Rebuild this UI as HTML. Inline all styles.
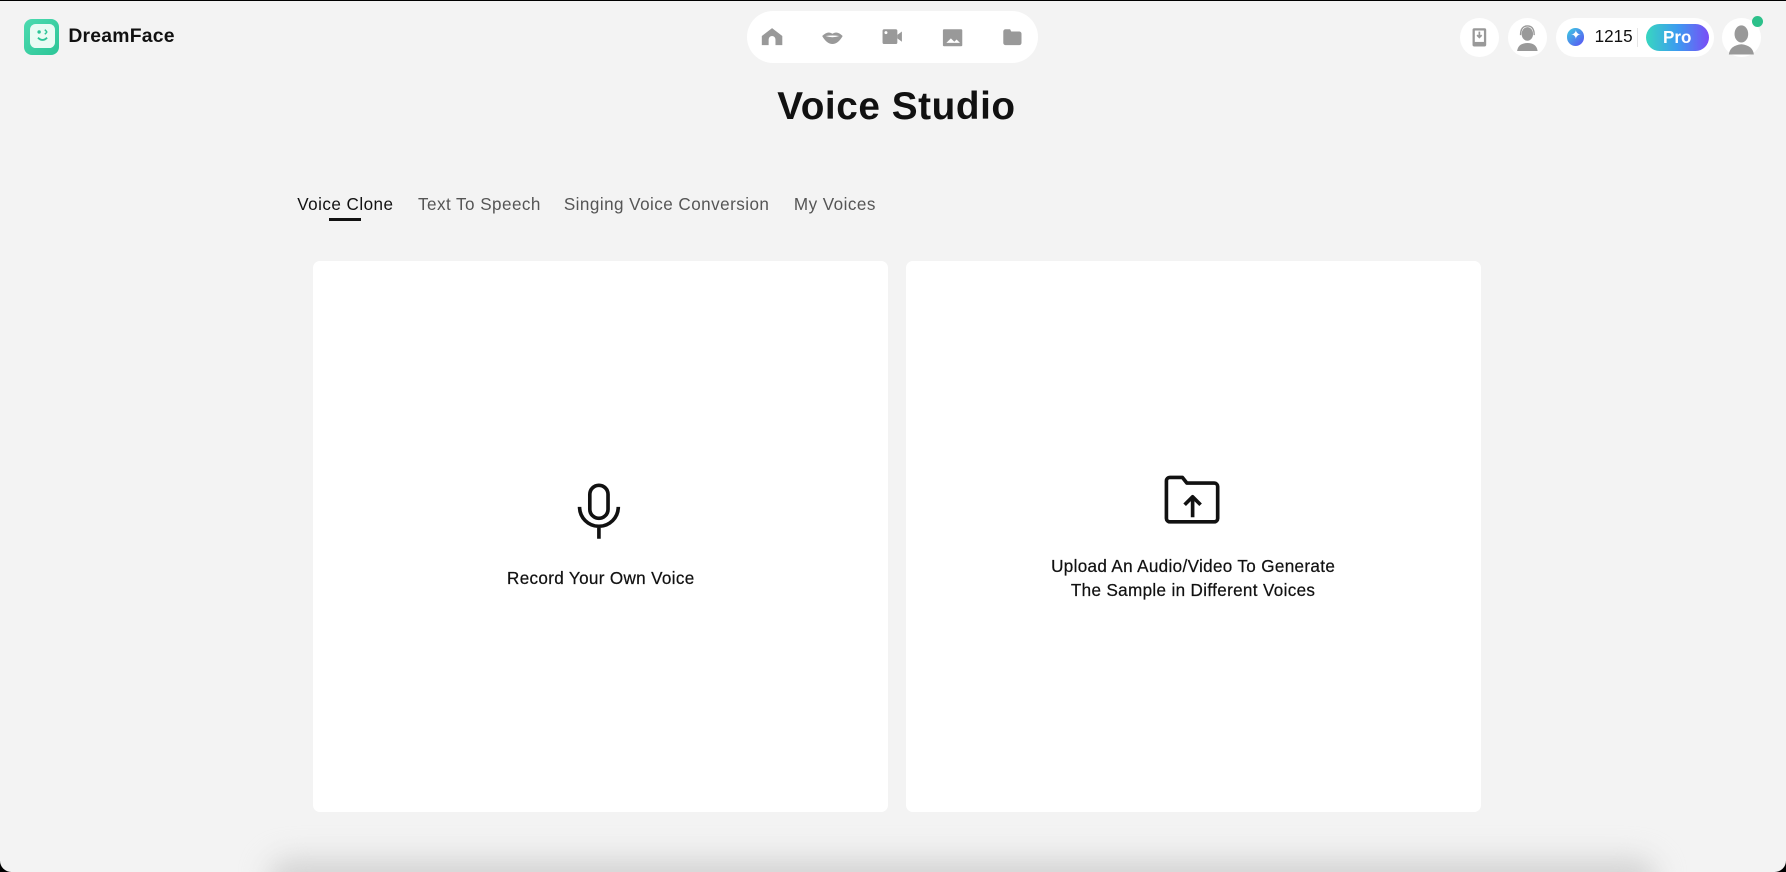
<!DOCTYPE html>
<html><head><meta charset="utf-8"><style>
html{zoom:1.13903;overflow:hidden}
body{margin:0;width:1568px;height:766px;background:#000;overflow:hidden;font-family:"Liberation Sans",sans-serif}
.page{position:absolute;left:0;top:1px;width:1568px;height:765px;background:#f3f3f3;border-radius:0 0 10px 10px;overflow:hidden}
.abs{position:absolute}
.circ{position:absolute;width:34px;height:34px;border-radius:50%;background:#fff;top:15px}
.tab{position:absolute;top:170px;font-size:15px;color:#555;white-space:nowrap;letter-spacing:0.4px}
.card{position:absolute;top:228px;width:505px;height:484px;background:#fff;border-radius:6px}
.ct{position:absolute;width:100%;text-align:center;font-size:15px;color:#111;line-height:21px;letter-spacing:0.3px;-webkit-text-stroke:0.2px #111}
</style></head><body><div class="page">
<div class="abs" style="left:21px;top:16px;width:31px;height:31px;border-radius:7px;background:linear-gradient(135deg,#4ddbb0,#2cc597)"></div>
<div class="abs" style="left:26px;top:20px;width:22px;height:21px;border-radius:5px;background:#eafbf4"></div>
<svg class="abs" style="left:26px;top:20px" width="22" height="21"><circle cx="8" cy="7" r="1.5" fill="#2cc597"/><path d="M13 5l2 2M13 9l2-2" stroke="#2cc597" stroke-width="1.3"/><path d="M7 12q4 4 8 0" stroke="#2cc597" stroke-width="1.6" fill="none"/></svg>
<div class="abs" style="left:60px;top:21px;font-size:17px;font-weight:bold;color:#111;letter-spacing:0.2px">DreamFace</div>
<div class="abs" style="left:656px;top:9px;width:255px;height:45px;border-radius:23px;background:#fff"></div>
<svg class="abs" style="left:656px;top:9px" width="255" height="45" fill="#999">
<path d="M13 30v-8l9-7 9 7v8h-6v-5a3 3 0 0 0-6 0v5z"/>
<path d="M66 22q5-5 9-2q4-3 9 2q-4 7-9 7q-5 0-9-7zM69 22q6 2 12 0q-6-1-12 0z"/>
<rect x="119" y="16" width="13" height="13" rx="1.5"/><path d="M132 21l4-3v9l-4-3z"/><circle cx="122" cy="19" r="1.3" fill="#fff"/>
<rect x="172" y="16" width="17" height="15" rx="1"/><path d="M175 28l4-4 3 3 2-2 3 3z" fill="#fff"/>
<path d="M225 18a2 2 0 0 1 2-2h4l1 2h7a2 2 0 0 1 2 2v8a2 2 0 0 1-2 2h-12a2 2 0 0 1-2-2z"/>
</svg>
<div class="circ" style="left:1282px"></div>
<svg class="abs" style="left:1282px;top:15px" width="34" height="34"><rect x="11" y="9" width="12" height="16" rx="1.5" fill="#999"/><rect x="13" y="11" width="8" height="10" fill="#fff"/><path d="M17 12v5M15 15l2 2 2-2" stroke="#999" stroke-width="1.5" fill="none"/></svg>
<div class="circ" style="left:1324px"></div>
<svg class="abs" style="left:1324px;top:15px" width="34" height="34"><ellipse cx="17" cy="14" rx="5" ry="6" fill="#999"/><path d="M8 29q1-7 9-7q8 0 9 7z" fill="#999"/><path d="M11 15q0-8 6-8q6 0 6 8" stroke="#999" stroke-width="1.2" fill="none"/></svg>
<div class="abs" style="left:1366px;top:15px;width:139px;height:34px;border-radius:17px;background:#fff"></div>
<div class="abs" style="left:1376px;top:24px;width:15px;height:15px;border-radius:50%;background:linear-gradient(135deg,#3ccfe0,#5b4ef5)"></div>
<div class="abs" style="left:1378px;top:23px;width:11px;color:#fff;font-size:11px;text-align:center">✦</div>
<div class="abs" style="left:1400px;top:23px;font-size:15px;color:#111">1215</div>
<div class="abs" style="left:1437px;top:24px;width:1px;height:16px;background:#e5e5e5"></div>
<div class="abs" style="left:1445px;top:20px;width:55px;height:24px;border-radius:12px;background:linear-gradient(90deg,#38d6c0,#3c9bf0,#7a4cf6);color:#fff;font-weight:bold;font-size:15px;text-align:center;line-height:24px">Pro</div>
<div class="circ" style="left:1512px"></div>
<svg class="abs" style="left:1512px;top:15px" width="34" height="34"><ellipse cx="17" cy="14" rx="6" ry="7.5" fill="#999"/><path d="M6 32q1-8 11-9q10 1 11 9z" fill="#999"/></svg>
<div class="abs" style="left:1538px;top:13px;width:10px;height:10px;border-radius:50%;background:#2cc08a"></div>
<div class="abs" style="left:0;width:1574px;top:74px;text-align:center;font-size:34px;font-weight:bold;color:#111;letter-spacing:0.5px">Voice Studio</div>
<div class="tab" style="left:261px;color:#111">Voice Clone</div>
<div class="abs" style="left:289px;top:190px;width:28px;height:3px;background:#111"></div>
<div class="tab" style="left:367px">Text To Speech</div>
<div class="tab" style="left:495px">Singing Voice Conversion</div>
<div class="tab" style="left:697px">My Voices</div>
<div class="card" style="left:275px">
<svg class="abs" style="left:230px;top:195px" width="44" height="52" fill="none" stroke="#111" stroke-width="3.2"><rect x="13" y="2" width="16" height="29" rx="8"/><path d="M4 21a17 17 0 0 0 34 0M21 38v11"/></svg>
<div class="ct" style="top:269px">Record Your Own Voice</div>
</div>
<div class="card" style="left:795px">
<svg class="abs" style="left:226px;top:187px" width="52" height="48" fill="none" stroke="#111" stroke-width="3.2" stroke-linejoin="round"><path d="M3 6a3 3 0 0 1 3-3h11l4 5h24a3 3 0 0 1 3 3v28a3 3 0 0 1-3 3H6a3 3 0 0 1-3-3z"/><path d="M26 38V20M19 27l7-7 7 7"/></svg>
<div class="ct" style="top:258px">Upload An Audio/Video To Generate<br>The Sample in Different Voices</div>
</div>
<div class="abs" style="left:235px;top:752px;width:1220px;height:40px;border-radius:20px;background:#d4d4d4;filter:blur(12px)"></div>
</div></body></html>
